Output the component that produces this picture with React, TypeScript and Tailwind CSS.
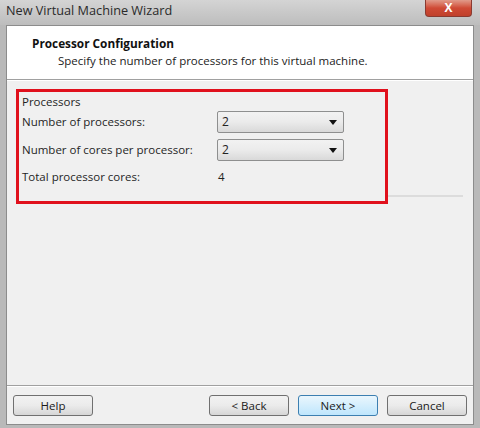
const font = { fontFamily: '"Open Sans", "Liberation Sans", sans-serif' };

function Select({ value }: { value: string }) {
  return (
    <div className="flex h-[22px] w-[127px] items-center justify-between rounded-[2px] border border-[#8e8f8f] bg-gradient-to-b from-[#f2f2f2] via-[#ebebeb] to-[#d9d9d9] pl-[4px] pr-[6px] text-[12px] text-[#222]">
      <span>{value}</span>
      <svg width="8" height="5" viewBox="0 0 8 5">
        <path d="M0 0 H8 L4 5 Z" fill="#111" />
      </svg>
    </div>
  );
}

function Btn({ label, active }: { label: string; active?: boolean }) {
  return (
    <div
      className={
        "flex h-[21px] w-[80px] items-center justify-center rounded-[3px] border text-[11.5px] text-[#1a1a1a] " +
        (active
          ? "border-[#3c7fb1] bg-gradient-to-b from-[#eaf6fd] to-[#bee6fd]"
          : "border-[#707070] bg-gradient-to-b from-[#f2f2f2] via-[#ebebeb] to-[#d6d6d6]")
      }
    >
      {label}
    </div>
  );
}

export default function App() {
  return (
    <div className="flex h-[428px] w-[480px] flex-col bg-[#b9b9b9]" style={font}>
      {/* title bar */}
      <div className="flex h-[25px] shrink-0 items-start justify-between bg-gradient-to-b from-[#d4d4d4] to-[#bdbdbd] pl-[6px] pr-[8px]">
        <span className="mt-[1px] text-[12.7px] text-[#2a2a2a]">New Virtual Machine Wizard</span>
        <div className="flex h-[17px] w-[47px] items-center justify-center rounded-b-[4px] border border-t-0 border-[#8a3a30] bg-gradient-to-b from-[#e09a8a] via-[#cf4a35] to-[#c0412c]">
          <span className="text-[12px] font-bold leading-none text-white">X</span>
        </div>
      </div>

      {/* window body */}
      <div className="flex flex-1 flex-col px-[6px] pb-[3px]">
        <div className="flex flex-1 flex-col border border-[#8c8c8c] bg-[#f0f0f0]">
          {/* header */}
          <div className="flex h-[54px] flex-col border-b border-[#a0a0a0] bg-white pl-[25px] pt-[9px]">
            <span className="text-[11.8px] font-bold leading-[16px] text-[#111]">Processor Configuration</span>
            <span className="pl-[26px] pt-[2px] text-[11.5px] leading-[16px] text-[#222]">
              Specify the number of processors for this virtual machine.
            </span>
          </div>
          <div className="h-px bg-white" />

          {/* content */}
          <div className="flex flex-1 flex-col pl-[9px] pr-[10px] pt-[8px]">
            <div className="flex items-end">
              <div className="flex h-[115px] w-[372px] flex-col border-[3px] border-[#e0101c] pl-[3px] pt-[2px] text-[11.5px] text-[#1f1f1f]">
                <span className="leading-[16px]">Processors</span>
                <div className="mt-[1px] flex items-center">
                  <span className="w-[195px]">Number of processors:</span>
                  <Select value="2" />
                </div>
                <div className="mt-[6px] flex items-center">
                  <span className="w-[195px]">Number of cores per processor:</span>
                  <Select value="2" />
                </div>
                <div className="mt-[7px] flex items-center">
                  <span className="w-[196px]">Total processor cores:</span>
                  <span>4</span>
                </div>
              </div>
              <div className="mb-[7px] h-[2px] flex-1 bg-[#dcdcdc]" />
            </div>
            <div className="flex-1" />
          </div>

          {/* footer */}
          <div className="border-t border-[#a0a0a0]">
            <div className="h-px bg-white" />
            <div className="flex h-[37px] items-center pl-[6px] pr-[6px]">
              <Btn label="Help" />
              <div className="flex-1" />
              <div className="flex gap-[9px]">
                <Btn label="< Back" />
                <Btn label="Next >" active />
                <Btn label="Cancel" />
              </div>
            </div>
          </div>
        </div>
      </div>
    </div>
  );
}
